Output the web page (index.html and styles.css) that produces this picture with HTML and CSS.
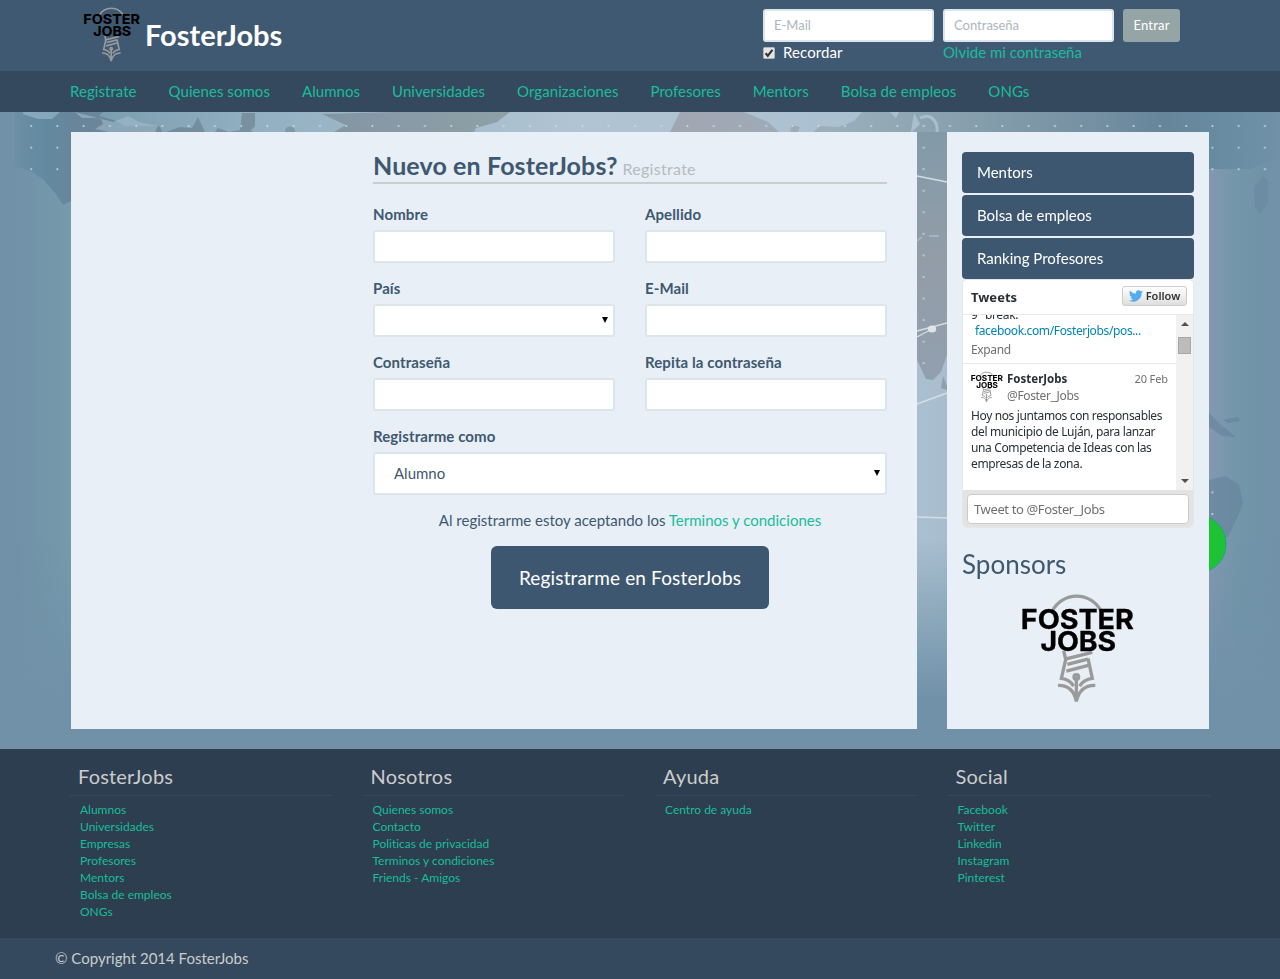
FILE: index.html
```html
<!DOCTYPE html>
<html lang="es">
<head>
<meta charset="utf-8">
<title>FosterJobs</title>
<link rel="stylesheet" href="styles.css">
</head>
<body>
<svg class="defs" width="0" height="0" aria-hidden="true">
  <symbol id="logo" viewBox="235 155 360 340">
    <g class="bulb" fill="none" stroke-width="10">
      <path d="M338 212A82 82 0 0 1 484 212"/>
      <path d="M372 332L378 358L365 415Q390 418 402 438M445 355L458 415Q432 418 420 438"/>
      <path d="M376 357L458 337M383 373L445 357M380 393L446 376"/>
      <path d="M355 436Q400 435 410 484Q421 435 467 436M410 411V484"/>
      <circle cx="410" cy="411" r="7"/>
    </g>
    <text class="logo-text" x="243" y="265" textLength="340" lengthAdjust="spacingAndGlyphs">FOSTER</text>
    <text class="logo-text" x="302" y="332" textLength="228" lengthAdjust="spacingAndGlyphs">JOBS</text>
  </symbol>
</svg>

<header class="header">
  <a class="brand"><svg class="brand-logo"><use href="#logo"/></svg><span class="brand-name">FosterJobs</span></a>
  <form class="login">
    <div class="login-col">
      <input class="login-input" placeholder="E-Mail">
      <label class="remember"><svg class="check" viewBox="0 0 12 12"><rect x=".5" y=".5" width="11" height="11" rx="1" fill="#e4e4e4" stroke="#b5b5b5"/><path d="M2.6 6.2L4.8 8.8L9.4 2.8" fill="none" stroke="#333" stroke-width="2.1"/></svg>Recordar</label>
    </div>
    <div class="login-col">
      <input class="login-input" placeholder="Contraseña">
      <a class="link">Olvide mi contraseña</a>
    </div>
    <button class="login-btn" type="button">Entrar</button>
  </form>
</header>

<nav class="nav">
  <a>Registrate</a><a>Quienes somos</a><a>Alumnos</a><a>Universidades</a><a>Organizaciones</a><a>Profesores</a><a>Mentors</a><a>Bolsa de empleos</a><a>ONGs</a>
</nav>

<main class="main">
  <svg class="map" viewBox="0 112 1280 637" aria-hidden="true">
    <defs>
      <linearGradient id="sea"><stop offset="0" stop-color="#7091a7"/><stop offset=".012" stop-color="#7091a7"/><stop offset=".055" stop-color="#769bac"/><stop offset=".2" stop-color="#92b0c2"/><stop offset=".45" stop-color="#b1c4d3"/><stop offset=".73" stop-color="#a9bfd0"/><stop offset=".94" stop-color="#8599b2"/><stop offset=".967" stop-color="#7296aa"/><stop offset="1" stop-color="#7091a7"/></linearGradient>
      <linearGradient id="land" gradientUnits="userSpaceOnUse" x1="0" y1="0" x2="1280" y2="0"><stop offset="0" stop-color="#7091a7"/><stop offset=".035" stop-color="#638aa0"/><stop offset=".06" stop-color="#69859a"/><stop offset=".3" stop-color="#8799a6"/><stop offset=".37" stop-color="#8b9fa6"/><stop offset=".55" stop-color="#a2a7b4"/><stop offset=".65" stop-color="#9aafbb"/><stop offset=".74" stop-color="#8aa2af"/><stop offset=".86" stop-color="#748fa2"/><stop offset=".91" stop-color="#65859a"/><stop offset=".98" stop-color="#6b8fa5"/><stop offset="1" stop-color="#7091a7"/></linearGradient>
      <linearGradient id="fade" x2="0" y2="1"><stop offset="0" stop-color="#7091a7" stop-opacity="0"/><stop offset=".67" stop-color="#7091a7" stop-opacity="0"/><stop offset=".92" stop-color="#7091a7"/></linearGradient>
      <linearGradient id="strait" x2="0" y2="1"><stop offset="0" stop-color="#829aa8"/><stop offset=".5" stop-color="#929da8"/><stop offset="1" stop-color="#929fae"/></linearGradient>
      <pattern id="dots" x="18.2" y="115.3" width="26.25" height="21.55" patternUnits="userSpaceOnUse"><circle cx="13" cy="10.8" r="1" fill="#c9dce5"/></pattern>
    </defs>
    <rect y="112" width="1280" height="637" fill="url(#sea)"/>
    <path fill="url(#land)" d="M15 112H103L99 116L114 120L125 126H159L163 133L180 127L192 128L198 117L204 130L209 139L218 128L229 132L240 130L242 113H255V126L245 137L250 131L265 134L272 145H305L302 137H325L346 125L322 114L395 112H510L497 122L476 128L470 140V155H71V201L63 205L55 193L44 180L32 172L15 166Z"/>
    <path fill="url(#land)" d="M680 112H744L768 122L779 132V150H668L675 133L669 134Z"/>
    <path fill="url(#land)" d="M791 125L800 127L797 134L790 137ZM809 136L820 126L839 127L854 121L862 112H890L896 118L899 112H1280V157L1265 163L1250 169L1235 169L1220 169H1209V200H917V140H904L920 124L914 113L908 150H809Z"/>
    <path d="M920 118C933 112 938 124 937 132" fill="none" stroke="#a9bfcd" stroke-width="3"/>
    <path fill="url(#strait)" d="M917 132H947V355L941 372L933 380L926 379L917 360Z"/>
    <path d="M943 376L947 386V390L941 388Z" fill="#8f9fae"/>
    <g fill="#a5bfd0" opacity=".55">
      <path d="M23 114L38 119H52L60 112H23Z"/>
      <path d="M75 112L82 118H101L103 124L95 129L114 133L125 137L130 133L144 132L155 132L158 126L139 122L128 116L113 122Z"/>
    </g>
    <ellipse cx="290" cy="131" rx="5" ry="4.500" fill="#8198a8"/>
    <g fill="#65829a" opacity=".6">
      <path d="M1254 187L1263 176L1268 181V203L1260 214L1255 207Z" opacity=".6"/>
      <path d="M1209 413L1220 424L1236 437L1222 436L1209 427ZM1223 420L1238 417L1240 421L1228 423Z"/>
      <path d="M1226 476L1239 485L1243 503L1237 518L1228 537L1209 541V480ZM1209 550H1221L1219 558L1212 560Z"/>
    </g>
    <rect y="112" width="1280" height="637" fill="url(#fade)"/>
    <path fill="url(#dots)" d="M18 116H1280V136H18ZM18 136H71V180H18ZM917 132H947V380H917ZM1209 136H1270V180H1209ZM1209 482H1235V570H1209Z"/>
    <g fill="none" stroke="#d5dde4" stroke-width="1.4">
      <path d="M917 176L947 182M917 331L947 323M917 337L932 329M917 404L947 393M917 517L947 518"/>
      <path d="M917 241L922 237M929 236H939" stroke="#a9b9c9"/>
    </g>
    <ellipse cx="932" cy="329" rx="4.2" ry="3.5" fill="#e2e4e7"/>
    <ellipse cx="1200" cy="544" rx="26" ry="28" fill="#1ec235" stroke="#22a282"/>
  </svg>

  <section class="panel">
    <form class="signup">
      <h2 class="signup-title">Nuevo en FosterJobs? <small>Registrate</small></h2>
      <div class="fields">
        <div class="field"><label>Nombre</label><input></div>
        <div class="field"><label>Apellido</label><input></div>
        <div class="field"><label>País</label><div class="select"></div></div>
        <div class="field"><label>E-Mail</label><input></div>
        <div class="field"><label>Contraseña</label><input></div>
        <div class="field"><label>Repita la contraseña</label><input></div>
        <div class="field wide"><label>Registrarme como</label><div class="select tall">Alumno</div></div>
      </div>
      <p class="terms">Al registrarme estoy aceptando los <a class="link">Terminos y condiciones</a></p>
      <button class="submit" type="button">Registrarme en FosterJobs</button>
    </form>
  </section>

  <aside class="side">
    <div class="side-links"><a>Mentors</a><a>Bolsa de empleos</a><a>Ranking Profesores</a></div>
    <div class="tweets">
      <div class="tweets-head"><b>Tweets</b><span class="follow"><svg viewBox="0 0 24 20" width="14" height="12"><path fill="#55acee" d="M24 2.400a10 10 0 0 1-2.800.8A5 5 0 0 0 23.300.500a10 10 0 0 1-3.100 1.200A4.900 4.900 0 0 0 11.800 6.200 14 14 0 0 1 1.700 1a4.900 4.900 0 0 0 1.500 6.600 5 5 0 0 1-2.200-.6 4.900 4.900 0 0 0 3.900 4.900 5 5 0 0 1-2.200.1 4.900 4.900 0 0 0 4.600 3.400A9.900 9.900 0 0 1 0 17.500 14 14 0 0 0 21.500 5a10 10 0 0 0 2.500-2.600z"/></svg>Follow</span></div>
      <div class="tweets-body">
        <div class="feed">
          <div class="tweet-old"><div class="cut">9° break:</div><div class="tlink">facebook.com/Fosterjobs/pos...</div><div class="expand">Expand</div></div>
          <div class="tweet">
            <div class="author"><svg class="avatar"><use href="#logo"/></svg><div class="who"><b>FosterJobs</b><span>@Foster_Jobs</span></div><span class="date">20 Feb</span></div>
            <p>Hoy nos juntamos con responsables<br>del municipio de Luján, para lanzar<br>una Competencia de Ideas con las<br>empresas de la zona.</p>
          </div>
        </div>
        <div class="scroll"><i class="up"></i><i class="thumb"></i><i class="down"></i></div>
      </div>
      <div class="tweet-box"><span>Tweet to @Foster_Jobs</span></div>
    </div>
    <h3 class="sponsors">Sponsors</h3>
    <svg class="sponsor-logo"><use href="#logo"/></svg>
  </aside>
</main>

<footer class="footer">
  <div class="fcol"><h4>FosterJobs</h4><a>Alumnos</a><a>Universidades</a><a>Empresas</a><a>Profesores</a><a>Mentors</a><a>Bolsa de empleos</a><a>ONGs</a></div>
  <div class="fcol"><h4>Nosotros</h4><a>Quienes somos</a><a>Contacto</a><a>Politicas de privacidad</a><a>Terminos y condiciones</a><a>Friends - Amigos</a></div>
  <div class="fcol"><h4>Ayuda</h4><a>Centro de ayuda</a></div>
  <div class="fcol"><h4>Social</h4><a>Facebook</a><a>Twitter</a><a>Linkedin</a><a>Instagram</a><a>Pinterest</a></div>
</footer>
<div class="copyright">© Copyright 2014 FosterJobs</div>
</body>
</html>
```
FILE: styles.css
```css
* { box-sizing: border-box; }
body { margin: 0; font: 15px/21px Lato, sans-serif; color: #3e5871; font-variant-ligatures: none; }
h2, h3, h4, p { margin: 0; font-weight: 400; }
input, button { font-family: inherit; }
.defs { position: absolute; }
.logo-text { font: 700 80px Inter, sans-serif; fill: #000; stroke: #000; stroke-width: 1; }
.bulb { stroke: #9a9a9a; }
.link { color: #1abc9c; }

.header { height: 71px; background: #3f5972; display: flex; justify-content: space-between; padding: 0 100px 0 82px; }
.brand { display: flex; align-items: flex-start; padding-top: 6px; }
.brand-logo { width: 60px; height: 57px; }
.brand-logo .bulb { stroke: #b5aaa5; }
.brand-name { margin: 10px 0 0 3px; font-size: 29px; line-height: 38px; font-weight: 700; color: #fff; }
.login { display: flex; gap: 9px; padding-top: 9px; align-items: flex-start; }
.login-col { width: 171px; }
.login-input { display: block; width: 171px; height: 33px; border: 2px solid #dce4ec; border-radius: 3px; padding: 0 9px 2px; font-size: 13px; background: #fff; }
.login-input::placeholder { color: #acb6c0; }
.remember { display: flex; align-items: center; color: #fff; letter-spacing: .1px; }
.check { width: 12px; height: 12px; margin-right: 8px; }
.login-btn { width: 57px; height: 33px; border: 0; border-radius: 3px; background: #95a5a6; color: #fff; font-size: 13px; letter-spacing: .2px; padding: 0 0 2px; }

.nav { height: 41px; background: #34495e; display: flex; gap: 32px; padding: 10px 70px; color: #1abc9c; letter-spacing: .05px; }

.main { position: relative; height: 637px; display: flex; gap: 30px; padding: 20px 71px; background: #7091a7; }
.map { position: absolute; inset: 0; width: 1280px; height: 637px; }
.panel, .side { position: relative; background: #e8eff6; height: 597px; }
.panel { width: 846px; padding: 18px 30px 0 302px; }
.signup { display: flex; flex-direction: column; align-items: center; }
.signup-title { align-self: stretch; height: 34px; border-bottom: 2px solid #cacccd; font-size: 25px; line-height: 30px; font-weight: 700; letter-spacing: .12px; }
.signup-title small { font-size: 16px; font-weight: 400; color: #b4bcc2; letter-spacing: .3px; margin-left: -1.500px; }
.fields { align-self: stretch; display: grid; grid-template-columns: 1fr 1fr; column-gap: 30px; row-gap: 15px; margin-top: 20px; }
.field { display: flex; flex-direction: column; gap: 5px; }
.field label { align-self: flex-start; font-weight: 700; letter-spacing: .1px; }
.wide { grid-column: 1 / 3; }
.field input, .select { width: 100%; height: 33px; border: 2px solid #dce4ec; border-radius: 3px; background: #fff; }
.select { display: flex; align-items: center; justify-content: space-between; padding: 0 5px 2px 19px; }
.select::after { content: ""; margin-left: auto; border: 3px solid transparent; border-top: 6px solid #000; border-bottom: 0; }
.tall { height: 43px; padding-bottom: 0; }
.tall::after { margin-bottom: 2px; }
.terms { margin: 14px 0 15px; line-height: 22px; }
.submit { width: 278px; height: 63px; border: 0; border-radius: 6px; background: #3e5771; color: #fff; font-size: 19px; letter-spacing: .15px; }

.side { width: 262px; padding: 20px 15px 0; }
.side-links { display: flex; flex-direction: column; gap: 2px; }
.side-links a { height: 41px; padding: 10px 15px; border-radius: 4px; background: #3e5771; color: #fff; }
.tweets { height: 249px; border: 1px solid #e4e7ea; border-radius: 5px; background: #fff; font: 12px/16px "Noto Sans", sans-serif; letter-spacing: -.37px; color: #292f33; overflow: hidden; }
.tweets-head { height: 35px; padding: 6px 6px 0 8px; display: flex; justify-content: space-between; border-bottom: 1px solid #e8e8e8; font-size: 13px; line-height: 22px; letter-spacing: 0; }
.follow { display: flex; align-items: center; justify-content: center; gap: 3px; width: 65px; height: 20px; border: 1px solid #ccc; border-radius: 3px; background: linear-gradient(#fff, #dedede); font-size: 11px; line-height: 18px; font-weight: 600; color: #333; }
.tweets-body { display: flex; height: 175px; }
.feed { width: 213px; }
.tweet-old { height: 49px; padding-left: 8px; border-bottom: 1px solid #e8e8e8; overflow: hidden; }
.cut { margin-top: -8px; }
.tlink { padding-left: 4px; color: #0084b4; }
.expand { margin-top: 3px; color: #707070; }
.tweet { padding: 7px 8px; }
.author { display: flex; height: 37px; color: #707070; }
.avatar { width: 34px; height: 32px; margin-left: -1px; }
.who { display: flex; flex-direction: column; margin-left: 3px; line-height: 17px; margin-top: -1px; }
.who b { color: #292f33; font-size: 11.500px; letter-spacing: 0; }
.date { margin-left: auto; font-size: 11px; letter-spacing: -.1px; }
.tweet p { white-space: nowrap; }
.scroll { width: 17px; background: #f1f1f1; display: flex; flex-direction: column; align-items: center; padding: 7px 0 7px; }
.up, .down { border: 4px solid transparent; }
.up { border-top: 0; border-bottom-color: #505050; }
.down { border-bottom: 0; border-top-color: #505050; margin-top: auto; }
.thumb { width: 13px; height: 17px; margin-top: 11px; background: #bcbcbc; border: 1px solid #a8a8a8; }
.tweet-box { height: 38px; padding: 4px; background: #e3e3e3; color: #707070; }
.tweet-box span { display: block; width: 222px; height: 30px; border: 1px solid #ccc; border-radius: 4px; background: #fff; padding: 0 6px; font-size: 13px; line-height: 29px; }
.sponsors { margin-top: 20px; font-size: 26px; line-height: 32px; }
.sponsor-logo { display: block; width: 120px; height: 113px; margin: 12px auto 0; }

.footer { height: 189px; background: #2c3e50; display: grid; grid-template-columns: repeat(4, 262px); column-gap: 30.500px; padding: 11px 70px; }
.fcol { display: flex; flex-direction: column; font-size: 12px; line-height: 17px; color: #1abc9c; }
.fcol h4 { height: 36px; margin-bottom: 5px; padding-left: 8px; border-bottom: 1px solid #34495e; font-size: 20px; line-height: 32px; letter-spacing: .2px; color: #ccc; }
.fcol a { padding-left: 10px; }
.copyright { height: 41px; background: #34495e; padding: 10px 55px; color: #ccc; }
```
